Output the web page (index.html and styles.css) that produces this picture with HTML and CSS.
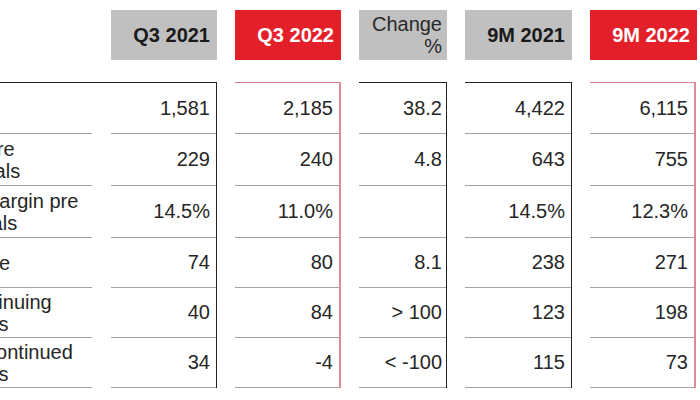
FILE: index.html
```html
<!DOCTYPE html>
<html lang="en">
<head>
<meta charset="utf-8">
<title>Key figures</title>
<link rel="stylesheet" href="styles.css">
</head>
<body>
<div class="sheet">
  <div class="head">
    <div class="hspace"></div>
    <div class="hcell grey w106">Q3 2021</div>
    <div class="hcell red w106">Q3 2022</div>
    <div class="hcell grey change w88"><span>Change</span><span>%</span></div>
    <div class="hcell grey w107">9M 2021</div>
    <div class="hcell red w107">9M 2022</div>
  </div>
  <div class="body">
    <div class="group dark first">
      <div class="col labels">
        <div class="lab"><span>Sales</span></div>
        <div class="lab"><span>EBITDA pre<br>exceptionals</span></div>
        <div class="lab margin"><span>EBITDA margin pre<br>exceptionals</span></div>
        <div class="lab"><span>Net income</span></div>
        <div class="lab sub"><span>from continuing<br>operations</span></div>
        <div class="lab sub"><span>from discontinued<br>operations</span></div>
      </div>
      <div class="col nums w105">
        <div class="num">1,581</div>
        <div class="num">229</div>
        <div class="num">14.5%</div>
        <div class="num">74</div>
        <div class="num">40</div>
        <div class="num">34</div>
      </div>
    </div>
    <div class="group redline col nums w106">
      <div class="num">2,185</div>
      <div class="num">240</div>
      <div class="num">11.0%</div>
      <div class="num">80</div>
      <div class="num">84</div>
      <div class="num">-4</div>
    </div>
    <div class="group dark col nums w88 chg">
      <div class="num">38.2</div>
      <div class="num">4.8</div>
      <div class="num"></div>
      <div class="num">8.1</div>
      <div class="num">&gt; 100</div>
      <div class="num">&lt; -100</div>
    </div>
    <div class="group dark col nums w107">
      <div class="num">4,422</div>
      <div class="num">643</div>
      <div class="num">14.5%</div>
      <div class="num">238</div>
      <div class="num">123</div>
      <div class="num">115</div>
    </div>
    <div class="group redline col nums w106">
      <div class="num">6,115</div>
      <div class="num">755</div>
      <div class="num">12.3%</div>
      <div class="num">271</div>
      <div class="num">198</div>
      <div class="num">73</div>
    </div>
  </div>
</div>
</body>
</html>
```
FILE: styles.css
```css
html, body {
  margin: 0;
  padding: 0;
  background: #ffffff;
}

body {
  font-family: "Liberation Sans", Arial, sans-serif;
  color: #262626;
}

.sheet {
  width: 700px;
  height: 400px;
  overflow: hidden;
}

.head {
  display: flex;
  gap: 18px;
  padding-top: 10px;
  height: 50px;
}

.hspace {
  flex: none;
  width: 93px;
}

.hcell {
  flex: none;
  height: 50px;
  box-sizing: border-box;
  display: flex;
  align-items: center;
  justify-content: flex-end;
  padding-right: 7px;
  font-size: 20px;
  font-weight: bold;
}

.hcell.grey {
  background: #c0c0c0;
  color: #1a1a1a;
}

.hcell.red {
  background: #e3202a;
  color: #ffffff;
}

.hcell.change {
  flex-direction: column;
  align-items: flex-end;
  justify-content: center;
  font-weight: normal;
  line-height: 22px;
  padding-right: 5px;
  color: #2a2a2a;
}

.w88 { width: 88px; }
.w105 { width: 105px; }
.w106 { width: 106px; }
.w107 { width: 107px; }

.body {
  display: flex;
  gap: 18px;
  margin-top: 22px;
}

.group {
  flex: none;
  box-sizing: border-box;
}

.group.dark {
  border-top: 1px solid #222222;
  border-right: 1px solid #222222;
}

.group.redline {
  border-top: 1px solid #dc7f8a;
  border-right: 2px solid #dc8a95;
}

.group.first {
  display: flex;
  gap: 19px;
  width: 217px;
}

.col {
  display: grid;
  grid-template-rows: 51px 52px 52px 50px 50px 50px;
}

.labels {
  width: 92px;
  flex: none;
}

.lab,
.num {
  box-sizing: border-box;
  border-bottom: 1px solid #a3a3a3;
  display: flex;
  align-items: center;
  font-size: 20px;
}

.lab {
  overflow: hidden;
  line-height: 22px;
}

.lab span {
  margin-left: -91px;
  white-space: nowrap;
}

.lab.margin span {
  margin-left: -94px;
}

.lab.sub span {
  margin-left: -85px;
}

.num {
  justify-content: flex-end;
  padding-right: 6px;
}

.chg .num {
  padding-right: 4px;
}
```
